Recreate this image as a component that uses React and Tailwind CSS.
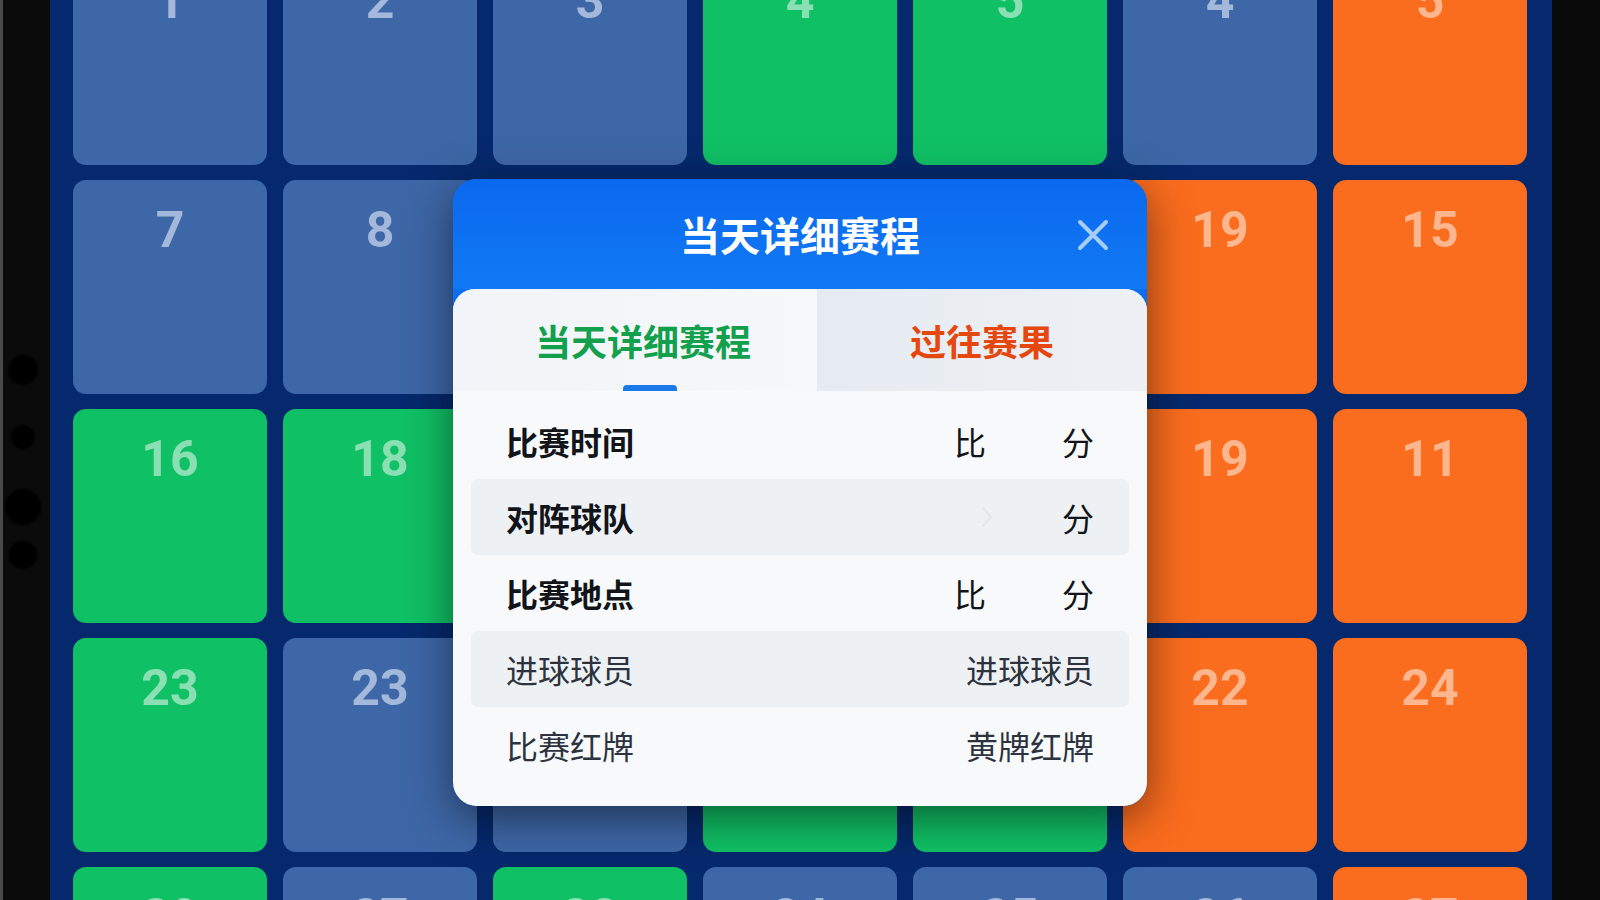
import React from "react";

// Colour of each calendar tile, written out in full so Tailwind picks them up
const tileStyles = {
  b: "bg-[#3e67a7] text-[#a3b8da]",
  g: "bg-[#10c065] text-[#8ae0b3]",
  o: "bg-[#fa6c1e] text-[#fdb68e]",
};

const rows = [
  [["b", 1], ["b", 2], ["b", 3], ["g", 4], ["g", 5], ["b", 4], ["o", 5]],
  [["b", 7], ["b", 8], ["b", 9], ["g", 10], ["g", 12], ["o", 19], ["o", 15]],
  [["g", 16], ["g", 18], ["b", 17], ["g", 14], ["o", 13], ["o", 19], ["o", 11]],
  [["g", 23], ["b", 23], ["b", 21], ["g", 20], ["g", 22], ["o", 22], ["o", 24]],
  [["g", 29], ["b", 27], ["g", 28], ["b", 24], ["b", 25], ["b", 26], ["o", 27]],
];

const details = [
  { label: "比赛时间", strong: true, right: "score" },
  { label: "对阵球队", strong: true, right: "chevron" },
  { label: "比赛地点", strong: true, right: "score" },
  { label: "进球球员", right: "进球球员" },
  { label: "比赛红牌", right: "黄牌红牌" },
];

const Tile = ({ kind, num }) => (
  <div
    className={`h-[214px] rounded-[13px] flex justify-center pt-[25px] ${tileStyles[kind]}`}
  >
    <span className="font-['Roboto',sans-serif] font-bold text-[50px] leading-none">
      {num}
    </span>
  </div>
);

const DetailRow = ({ row, index }) => {
  const bg = index % 2 === 1 ? "bg-[#eef1f4]" : "bg-[#f8f9fa]";
  const labelTone = row.strong
    ? "font-bold text-[#111418]"
    : "font-normal text-[#2c333e]";

  return (
    <div
      className={`h-[76px] mx-[18px] px-[35px] rounded-md flex items-center justify-between ${bg}`}
    >
      <span className={`text-[32px] leading-none ${labelTone}`}>{row.label}</span>
      {row.right === "score" && (
        <div className="flex items-center gap-[76px] text-[32px] leading-none text-[#111418]">
          <span>比</span>
          <span>分</span>
        </div>
      )}
      {row.right === "chevron" && (
        <div className="flex items-center gap-[68px] text-[32px] leading-none text-[#111418]">
          <svg width="14" height="24" viewBox="0 0 14 24" fill="none">
            <path
              d="M3 3l8 9-8 9"
              stroke="#e3e7ec"
              strokeWidth="2.5"
              strokeLinecap="round"
              strokeLinejoin="round"
            />
          </svg>
          <span>分</span>
        </div>
      )}
      {row.right !== "score" && row.right !== "chevron" && (
        <span className="text-[32px] leading-none text-[#2c333e]">{row.right}</span>
      )}
    </div>
  );
};

export default function App() {
  return (
    <div className="relative w-[1600px] h-[900px] overflow-hidden flex bg-[#0b0b0b] font-['Noto_Sans_CJK_SC',sans-serif]">
      {/* left bezel with sensor dots */}
      <div className="w-[50px] shrink-0 flex">
        <div className="w-[3px] bg-[#4a4a4a]" />
        <div className="w-[40px] flex flex-col items-center pt-[355px]">
          <div className="w-[30px] h-[30px] rounded-full bg-black blur-[1px]" />
          <div className="w-[24px] h-[24px] rounded-full bg-black blur-[1px] mt-[40px]" />
          <div className="w-[36px] h-[36px] rounded-full bg-black blur-[1px] mt-[40px]" />
          <div className="w-[28px] h-[28px] rounded-full bg-black blur-[1px] mt-[16px]" />
        </div>
      </div>

      {/* calendar board */}
      <div className="flex-1 bg-[#05296c] pl-[23px] pr-[25px] overflow-hidden">
        <div className="grid grid-cols-7 gap-x-4 gap-y-[15px] -mt-[49px]">
          {rows.flat().map(([kind, num], i) => (
            <Tile key={i} kind={kind} num={num} />
          ))}
        </div>
      </div>

      {/* right bezel */}
      <div className="w-[48px] shrink-0 bg-[#0a0a0a]" />

      {/* day schedule dialog */}
      <div className="absolute inset-0 flex justify-center pt-[179px] pointer-events-none">
        <div className="w-[694px] h-[627px] rounded-[24px] overflow-hidden bg-[#0d6df0] flex flex-col shadow-[0_12px_45px_rgba(0,0,0,0.5)] pointer-events-auto">
          <div className="relative h-[110px] shrink-0 flex items-center justify-center bg-gradient-to-b from-[#0a68ee] to-[#1279f4]">
            <h2 className="text-[40px] font-bold text-white leading-none">当天详细赛程</h2>
            <button className="absolute right-[36px] top-[38px] w-[36px] h-[36px] flex items-center justify-center">
              <svg width="34" height="34" viewBox="0 0 34 34" fill="none">
                <path
                  d="M4 4l26 26M30 4L4 30"
                  stroke="#a6cefa"
                  strokeWidth="4"
                  strokeLinecap="round"
                />
              </svg>
            </button>
          </div>

          <div className="flex-1 bg-[#f8f9fb] rounded-t-[22px] overflow-hidden flex flex-col">
            <div className="h-[102px] shrink-0 flex">
              <div className="relative w-[364px] flex items-center justify-center pl-[16px] bg-gradient-to-r from-[#f1f4f8] to-[#f6f8fa]">
                <span className="text-[36px] font-bold leading-none text-[#12a04c]">
                  当天详细赛程
                </span>
                <div className="absolute bottom-0 left-[170px] w-[54px] h-[6px] rounded-t-sm bg-[#1a7be8]" />
              </div>
              <div className="flex-1 flex items-center justify-center bg-gradient-to-r from-[#e6ebf1] to-[#edf1f5]">
                <span className="text-[36px] font-bold leading-none text-[#e5470e]">
                  过往赛果
                </span>
              </div>
            </div>

            <div className="pt-3 flex flex-col">
              {details.map((row, i) => (
                <DetailRow key={row.label} row={row} index={i} />
              ))}
            </div>
          </div>
        </div>
      </div>
    </div>
  );
}
